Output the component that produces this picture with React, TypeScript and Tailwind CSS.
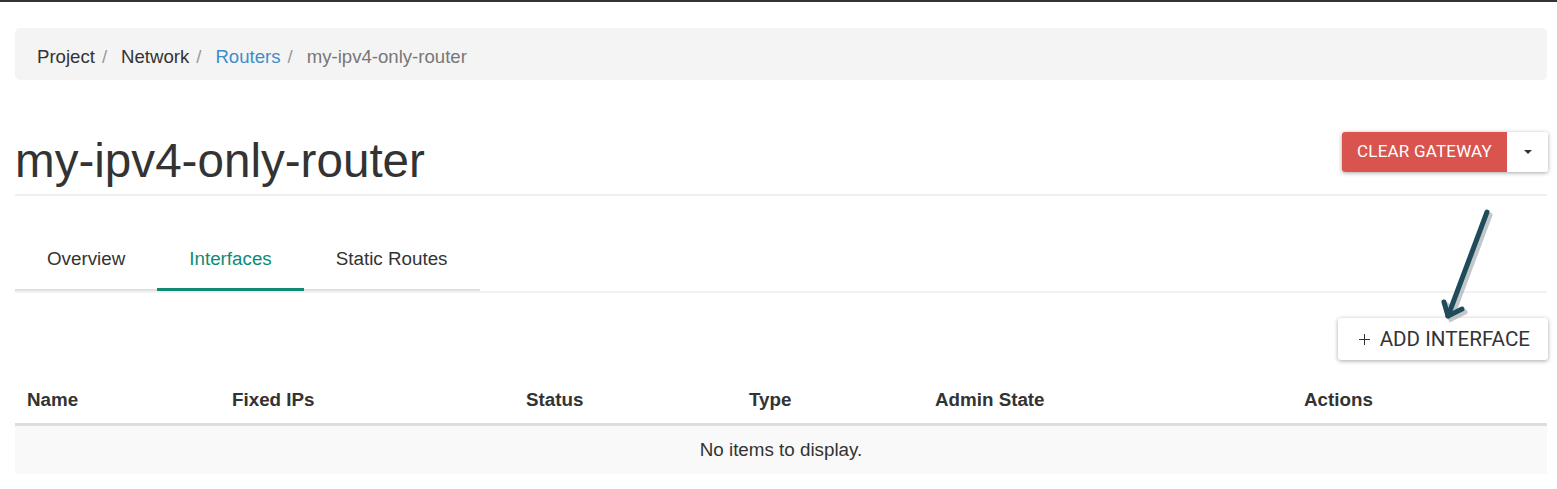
import React from 'react';

const crumbs = [
  { label: 'Project', tone: 'text-[#333]' },
  { label: 'Network', tone: 'text-[#333]' },
  { label: 'Routers', tone: 'text-[#3f8ccc]' },
];

const tabs = ['Overview', 'Interfaces', 'Static Routes'];

const columns = [
  { label: 'Name', w: 'w-[205px]' },
  { label: 'Fixed IPs', w: 'w-[294px]' },
  { label: 'Status', w: 'w-[223px]' },
  { label: 'Type', w: 'w-[186px]' },
  { label: 'Admin State', w: 'w-[369px]' },
  { label: 'Actions', w: 'flex-1' },
];

// annotation arrow drawn over the page
const Arrow: React.FC = () => (
  <svg
    className="absolute left-[1430px] top-[200px] pointer-events-none"
    width="80"
    height="130"
    viewBox="1430 200 80 130"
  >
    <g stroke="#9aa3a6" strokeWidth="5" strokeLinecap="round" fill="none" opacity="0.6">
      <path d="M1490 213 L1451 317" />
      <path d="M1447 303 L1451 317 L1465 310" />
    </g>
    <g stroke="#1f4b5b" strokeWidth="5" strokeLinecap="round" strokeLinejoin="round" fill="none">
      <path d="M1487 210 L1448 314" />
      <path d="M1444 300 L1448 314 L1462 307" />
    </g>
  </svg>
);

const RouterDetail: React.FC = () => {
  return (
    <div className="relative min-h-[489px] bg-white border-t-2 border-[#333] pl-[15px] pr-[10px] font-['Liberation_Sans',Arial,sans-serif] text-[18.8px] text-[#333]">
      <nav className="mt-[26px] h-[52px] bg-[#f4f4f4] rounded-[5px] px-[22px] pt-[6px] flex items-center text-[18.6px]">
        {crumbs.map((c) => (
          <span key={c.label} className="flex items-center">
            <span className={c.tone}>{c.label}</span>
            <span className="text-[#999] pl-[7px] pr-[14px]">/</span>
          </span>
        ))}
        <span className="text-[#777]">my-ipv4-only-router</span>
      </nav>

      <header className="mt-[54px] pb-[7px] border-b-2 border-[#f0f0f0] flex items-start justify-between">
        <h1 className="text-[47.6px] leading-[53px] text-[#333]">my-ipv4-only-router</h1>
        <div className="-mt-[2px] -mr-[1px] flex h-[40px] rounded-[3px] shadow-[0_1px_4px_rgba(0,0,0,0.35)] font-['Roboto',sans-serif]">
          <button className="h-full px-[15px] bg-[#d9534f] text-white text-[17px] tracking-[0.2px] rounded-l-[3px]">
            CLEAR GATEWAY
          </button>
          <button className="h-full w-[41px] bg-white rounded-r-[3px] flex items-center justify-center">
            <span className="block w-0 h-0 border-l-[4px] border-r-[4px] border-t-[4px] border-l-transparent border-r-transparent border-t-[#333]" />
          </button>
        </div>
      </header>

      <div className="mt-[34px] border-b-2 border-[#f2f2f2]">
        <ul className="flex w-[465px] border-b-2 border-[#e0e0e0]">
          {tabs.map((t) => (
            <li
              key={t}
              className={
                t === 'Interfaces'
                  ? 'h-[61px] -mb-[2px] px-8 flex items-center text-[#118a74] border-b-[3px] border-[#118a74]'
                  : 'h-[61px] -mb-[2px] px-8 flex items-center text-[#333] border-b-[3px] border-transparent'
              }
            >
              {t}
            </li>
          ))}
        </ul>
      </div>

      <div className="mt-[25px] flex justify-end">
        <button className="h-[42px] pl-[21px] pr-[18px] -mr-[1px] bg-white rounded-[3px] shadow-[0_1px_4px_rgba(0,0,0,0.35)] flex items-center gap-[10px] font-['Roboto',sans-serif] text-[20.6px] text-[#333]">
          <span className="relative block w-[11px] h-[11px]">
            <span className="absolute left-0 right-0 top-[5px] h-[1.5px] bg-[#333]" />
            <span className="absolute top-0 bottom-0 left-[5px] w-[1.5px] bg-[#333]" />
          </span>
          ADD INTERFACE
        </button>
      </div>

      <div className="mt-[18px]">
        <div className="flex h-[48px] items-center border-b-[3px] border-[#ddd] font-bold">
          {columns.map((c) => (
            <div key={c.label} className={`${c.w} px-[12px]`}>
              {c.label}
            </div>
          ))}
        </div>
        <div className="h-[48px] bg-[#f9f9f9] flex items-center justify-center">No items to display.</div>
      </div>

      <Arrow />
    </div>
  );
};

export default function App() {
  return <RouterDetail />;
}
